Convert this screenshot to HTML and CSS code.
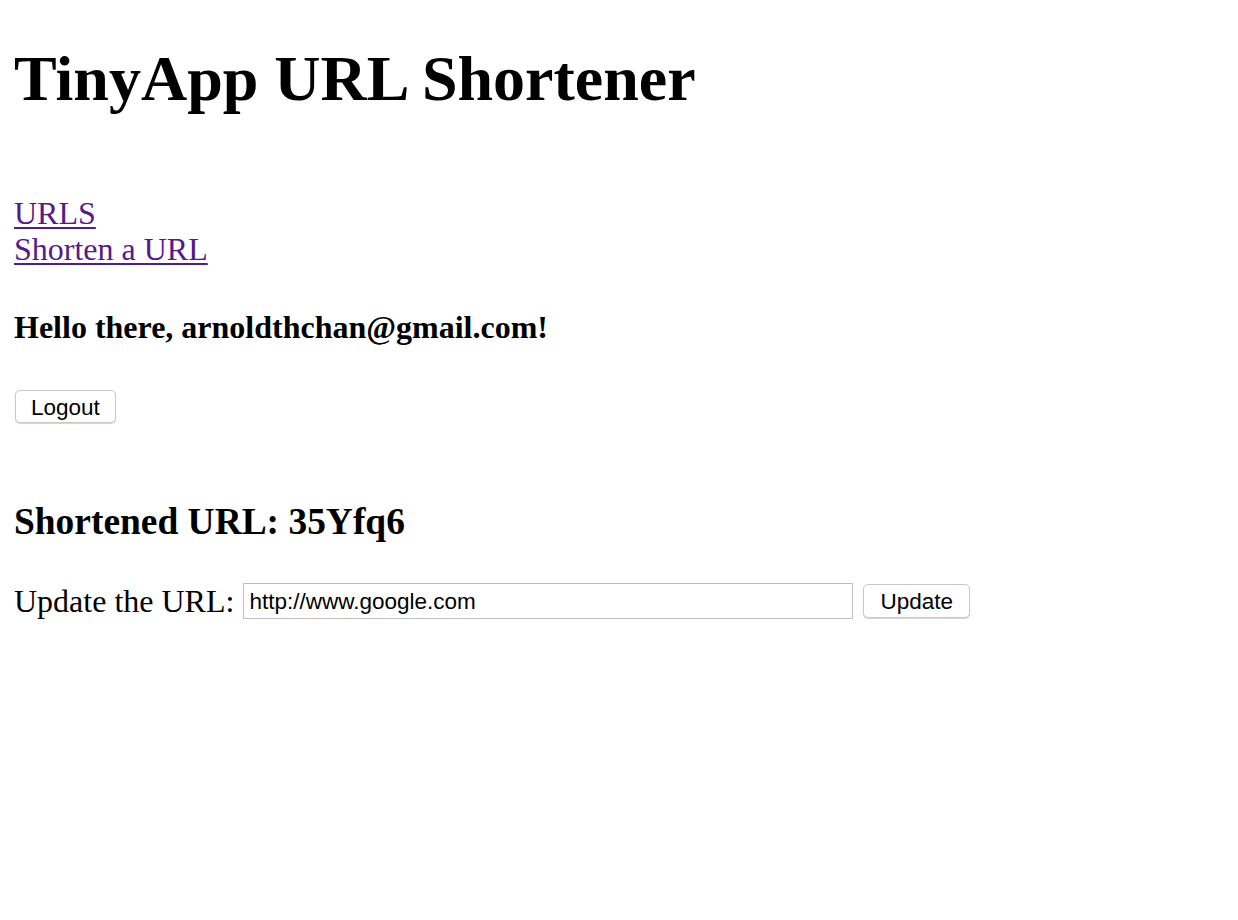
FILE: index.html
```html
<!DOCTYPE html>
<html>
<head>
<meta charset="utf-8">
<title>TinyApp</title>
<link rel="stylesheet" href="styles.css">
</head>
<body>
<div class="page">
  <h1 class="title">TinyApp URL Shortener</h1>
  <nav class="nav">
    <a href="#" class="nav-link">URLS</a>
    <a href="#" class="nav-link">Shorten a URL</a>
  </nav>
  <h4 class="greeting">Hello there, arnoldthchan@gmail.com!</h4>
  <form class="logout-form">
    <button type="button" class="btn">Logout</button>
  </form>
  <h3 class="short">Shortened URL: 35Yfq6</h3>
  <form class="update-form">
    <label class="update-label">Update the URL:</label>
    <input class="url-input" type="text" value="http://www.google.com">
    <button type="button" class="btn btn-update">Update</button>
  </form>
</div>
</body>
</html>
```
FILE: styles.css
```css
html, body {
  margin: 0;
  padding: 0;
  background: #fff;
}
body {
  font-family: "Liberation Serif", "Times New Roman", serif;
  color: #000;
}
.page {
  padding: 0 14px;
}
.title {
  margin: 42px 0 0;
  font-size: 64px;
  line-height: 74px;
  font-weight: bold;
}
.nav {
  display: flex;
  flex-direction: column;
  align-items: flex-start;
  margin-top: 79px;
}
.nav-link {
  font-size: 32px;
  line-height: 36px;
  color: #551a8b;
  text-decoration: underline;
  text-decoration-thickness: 2px;
  text-underline-offset: 3px;
}
.greeting {
  margin: 42px 0 0;
  font-size: 32px;
  line-height: 37px;
  font-weight: bold;
}
.logout-form {
  margin: 44px 0 0;
  display: flex;
}
.btn {
  font-family: "Liberation Sans", Arial, sans-serif;
  font-size: 22.5px;
  color: #000;
  background: #fff;
  border: 1px solid #c9c9c9;
  border-radius: 5px;
  box-shadow: 0 1px 1px rgba(0,0,0,0.18);
  height: 33px;
  padding: 2px 15px 0;
  margin: 0 0 0 1px;
  line-height: 29px;
}
.short {
  margin: 77px 0 0;
  font-size: 37.44px;
  line-height: 43px;
  font-weight: bold;
}
.update-form {
  margin: 40px 0 0;
  display: flex;
  align-items: center;
}
.update-label {
  font-size: 32px;
  line-height: 36px;
  margin-right: 9px;
}
.url-input {
  box-sizing: border-box;
  width: 610px;
  height: 36px;
  font-family: "Liberation Sans", Arial, sans-serif;
  font-size: 22.5px;
  color: #000;
  border: 1px solid #bfbfbf;
  border-radius: 0;
  padding: 2px 5px 0;
  margin: 0;
  outline: none;
}
.btn-update {
  margin-left: 10px;
  height: 34px;
  padding: 2px 16px 0;
  line-height: 30px;
}
```
